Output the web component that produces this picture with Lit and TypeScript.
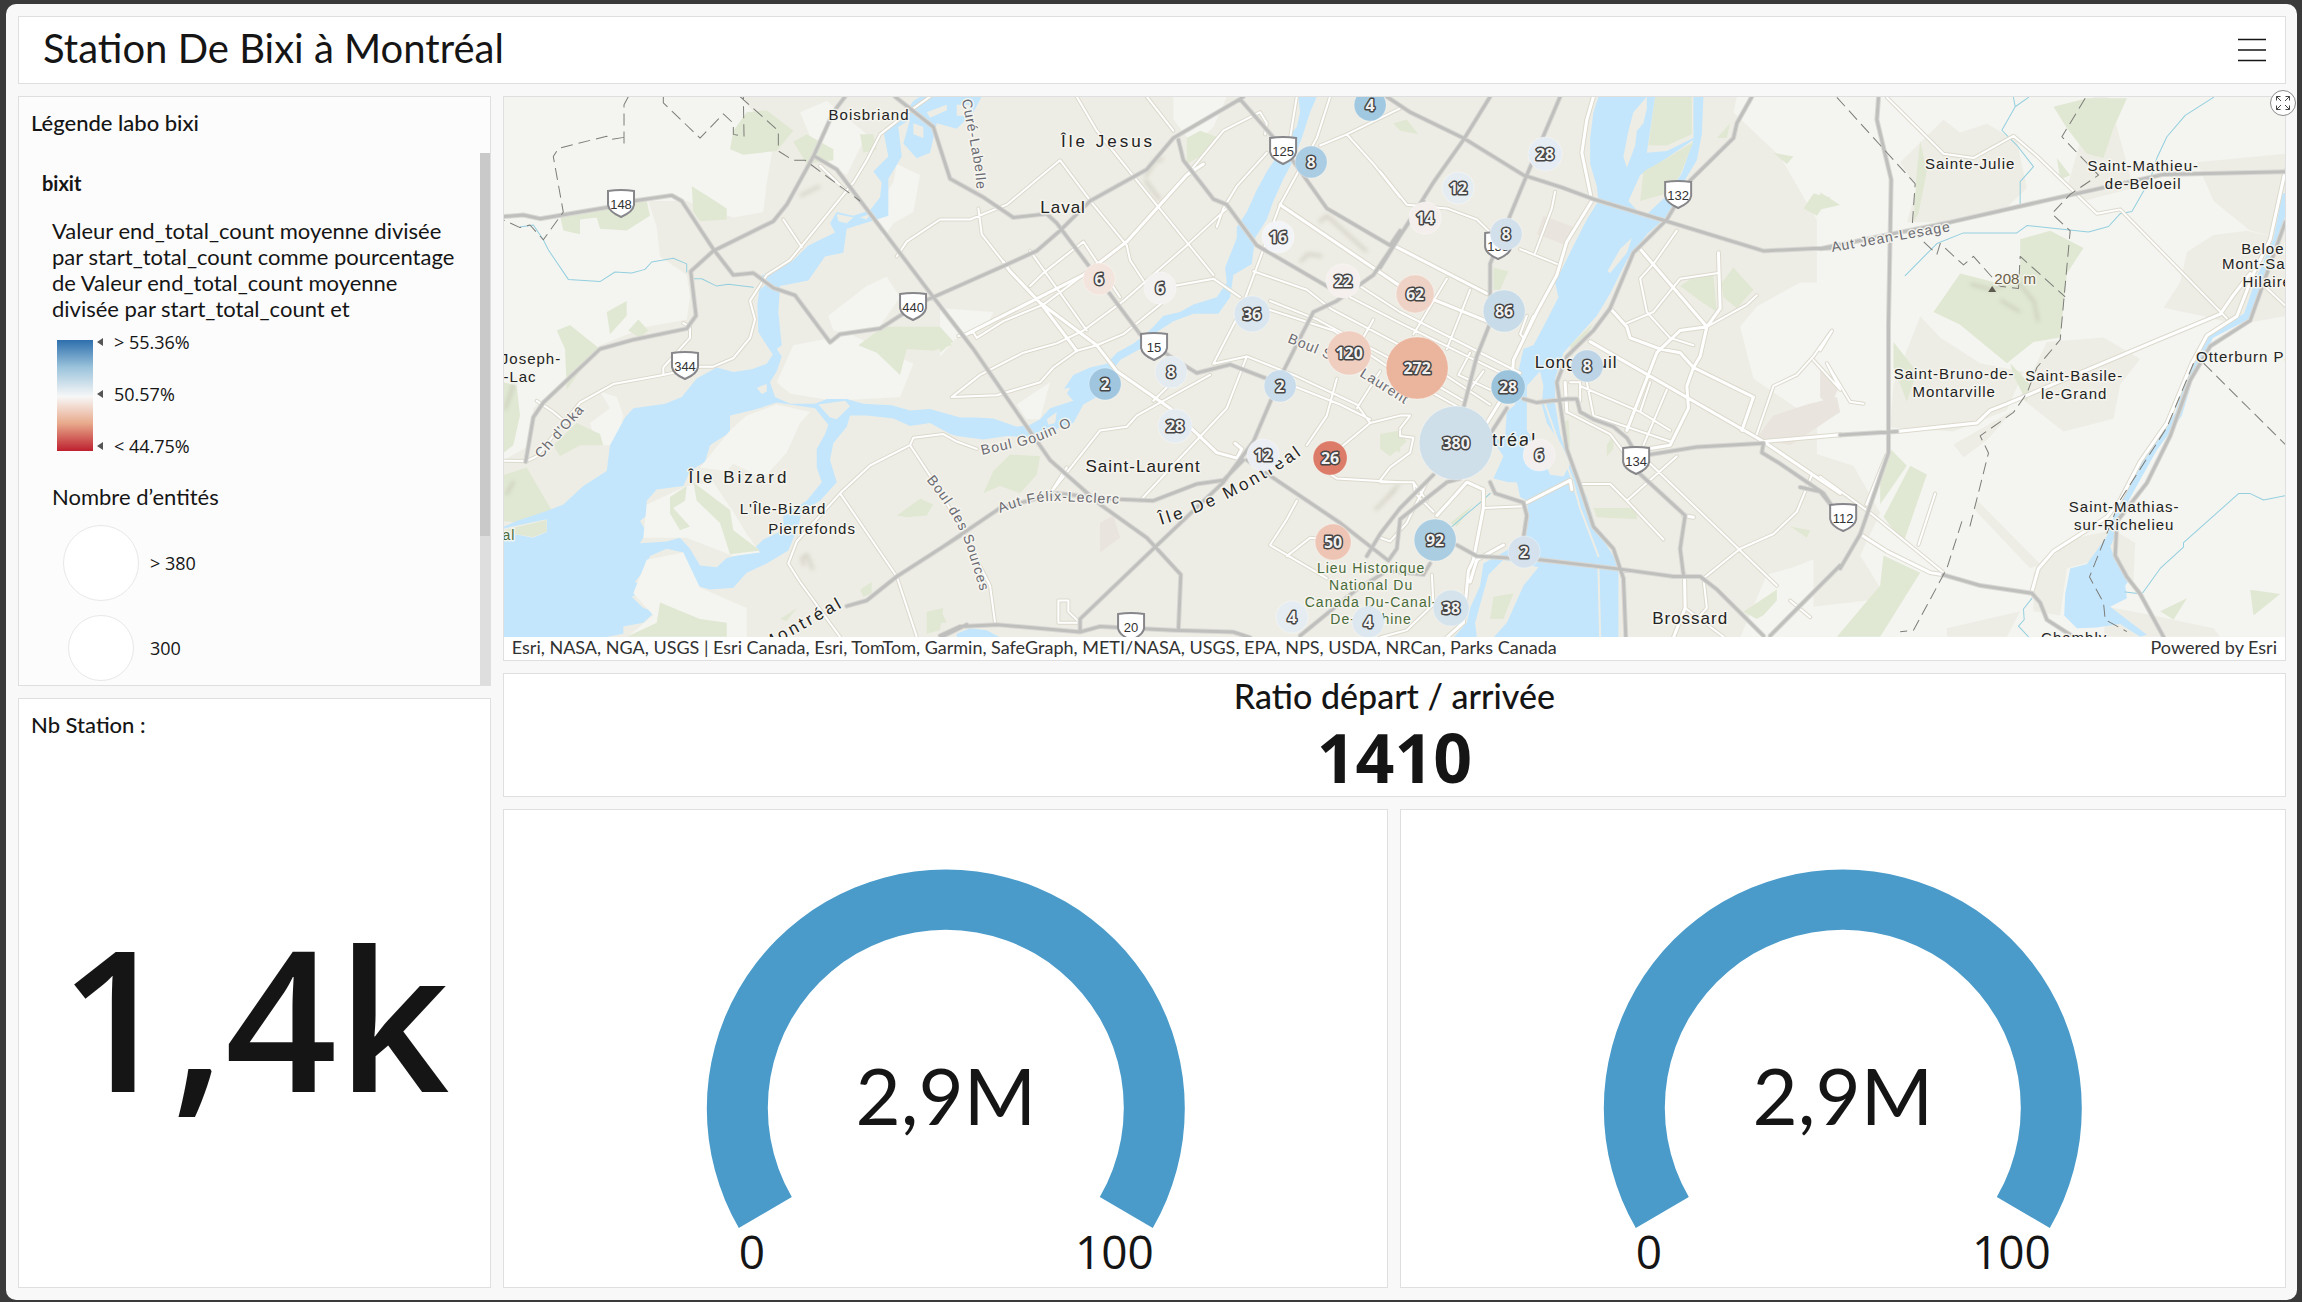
import { LitElement, html, svg, css } from "lit";
import { customElement, property } from "lit/decorators.js";

/* ---------- Base map geometry: tiles with a local grid, joined on one canvas ---------- */

type Tile = { x: number; y: number; sx: number; sy: number };
const T: Record<string, Tile> = {
  A: { x: 500, y: 90, sx: 3, sy: 2.703 },
  B: { x: 940, y: 90, sx: 3, sy: 2.703 },
  C: { x: 1380, y: 90, sx: 3, sy: 2.703 },
  D: { x: 1820, y: 0, sx: 3, sy: 2.34 },
};

/* Each entry is "tile x,y x,y ..." */
const toPath = (entry: string, close: boolean): string => {
  const [name, ...pts] = entry.trim().split(/\s+/);
  let t = T[name];
  const out: string[] = [];
  for (const p of pts) {
    if (T[p]) {
      t = T[p];
      continue;
    }
    const [x, y] = p.split(",").map(Number);
    out.push(`${(t.x + x / t.sx).toFixed(1)} ${(t.y + y / t.sy).toFixed(1)}`);
  }
  return "M" + out.join("L") + (close ? "Z" : "");
};
const areas = (list: string[]) => list.map((e) => toPath(e, true)).join("");
const lines = (list: string[]) => list.map((e) => toPath(e, false)).join("");

const FARM = [
  "A 12,18 720,18 800,100 820,150 800,250 790,330 700,345 560,300 445,300 470,370 480,450 560,500 570,560 560,620 440,640 300,690 180,800 100,860 90,960 12,1000",
  "A 985,610 1100,530 1160,505 1200,560 1130,650 1060,660 1000,650",
  "A 880,690 1050,660 1240,740 1200,830 1000,840 870,820 830,790",
  "A 330,860 300,815 350,830 370,880 350,960 290,960 270,900",
  "A 1150,400 1120,330 1180,250 1190,200 1260,230 1240,330 1180,360",
  "A 900,60 980,30 1100,120 1040,230 960,190",
  "C 1070,18 1380,18 1400,18 1400,1480 1080,1480 1160,1310 1240,1290 1380,1240 1380,940 1340,930 1250,860 1120,780 1080,640 1130,585 1260,520 1330,520 1380,460 1200,180 1060,60",
  "D -10,220 1400,220 1400,1500 -10,1500",
  "B 700,18 860,18 820,100 760,150 700,80",
  "B 230,850 330,790 300,890 260,890",
  "B 0,590 160,600 140,640 60,660 0,720",
];
const TOWN = [
  "D 240,380 370,280 420,310 500,290 590,330 620,440 540,500 390,520 260,520 290,440",
  "D 840,170 870,240 940,440 790,470 740,440",
  "D 1130,380 1395,360 1395,560 1290,540 1180,470",
  "D 1100,590 1180,550 1280,540 1395,560 1395,740 1250,760 1150,740 1030,720 1080,660",
  "D 300,740 360,790 480,850 610,870 560,960 400,1010 210,1000 220,900",
  "D 680,800 850,790 960,840 900,900 880,980 730,1010 600,930",
  "D 640,1340 760,1260 880,1240 945,1270 940,1360 880,1300 740,1330 720,1440 640,1430",
  "D -20,1060 100,1090 180,1200 120,1300 200,1400 -20,1420",
  "D 470,1170 660,1320 630,1330 460,1190",
  "D 380,1470 600,1430 560,1490 380,1490",
  "D 850,1490 860,1420 1000,1440 1180,1470 1200,1490",
  "D 400,1040 580,960 500,1030 430,1070",
];
const DUST = [
  "C 1280,850 1370,830 1380,870 1230,960 1130,940 1180,880",
  "D 0,860 60,900 30,950 0,930",
  "C 490,340 580,370 560,420 470,390",
  "B 480,1170 520,1150 540,1210 480,1250",
];
const GREEN = [
  "A 740,60 800,55 880,110 830,165 730,175 690,160 700,110",
  "A 575,260 620,285 680,320 680,350 600,355 580,330",
  "A 180,340 250,330 440,300 450,340 380,380 300,375 290,345 240,350 240,390 190,380",
  "A 320,600 380,570 380,610 330,660",
  "A 170,650 210,635 300,700 240,760 200,810 195,700",
  "A 385,650 415,620 445,650 420,670",
  "A 1075,690 1150,640 1320,640 1355,690 1300,705 1220,700 1200,770 1130,710",
  "A 12,1040 80,1020 155,1135 60,1170 12,1165",
  "A 160,960 230,900 300,930 310,960 240,960 180,990",
  "A 1190,1150 1260,1105 1300,1120 1280,1150 1220,1155",
  "A 1280,1410 1330,1400 1320,1460 1280,1470",
  "A 1080,1350 1115,1330 1115,1360 1090,1370",
  "A 880,140 920,120 1000,160 1000,190 920,200",
  "A 840,1430 890,1400 860,1435",
  "A 1080,120 1120,120 1130,160 1090,170",
  "A 12,790 50,800 60,880 40,960 12,980",
  "B 160,1030 210,985 300,990 290,1040 240,1090 180,1070 130,1090",
  "B 740,130 780,110 840,130 800,170 740,200",
  "B 0,640 40,680 0,710",
  "B 1320,930 1380,920 1380,980 1350,970",
  "B 0,1400 20,1440 0,1440",
  "C 40,90 80,80 115,120 60,110",
  "C 340,480 385,490 360,540 340,540",
  "C 900,530 950,500 1000,500 1010,600 960,570",
  "C 1025,520 1060,480 1120,540 1070,590 1030,560",
  "C 1010,130 1050,90 1040,130",
  "C 1180,170 1240,180 1220,200",
  "C 1270,320 1300,280 1350,290 1310,340",
  "C 680,960 700,930 700,970 680,990",
  "C 640,1130 770,1130 770,1160 650,1155",
  "C 1090,1410 1190,1350 1190,1380 1150,1420 1130,1430",
  "C 1230,1180 1290,1190 1280,1210",
  "C 0,930 60,930 80,950 30,990 0,970",
  "C 210,1170 280,1120 230,1180",
  "D 700,250 800,230 920,230 880,300 850,370 800,360 740,300",
  "D 300,330 320,400 295,500 280,520 290,400",
  "D 420,640 520,660 600,650 600,560 690,540 790,580 740,640 720,790 640,800 560,850 420,760 340,730",
  "D 220,800 290,870 260,940 220,860",
  "D 570,850 630,900 620,940 580,880",
  "D 210,1050 260,1090 180,1180 180,1120",
  "D 270,1090 320,1110 250,1270 190,1210",
  "D 190,1300 300,1340 180,1490 50,1490 180,1370",
  "D 1290,1380 1380,1390 1300,1440",
  "D 1020,1430 1100,1400 1060,1450",
  "D 0,450 60,480 0,490",
  "D 710,370 750,410 720,420",
];
const WATER = [
  "A 12,1480 12,1180 50,1165 140,1138 190,1120 250,1070 320,1030 330,960 375,885 400,860 495,848 545,830 590,780 650,750 700,762 755,755 800,740 818,715 800,690 775,655 772,580 778,540 800,525 780,505 810,490 880,460 925,420 1005,385 990,360 1010,330 1060,340 1110,325 1140,290 1145,250 1120,220 1165,180 1150,110 1200,80 1240,30 1260,18 1445,18 1420,60 1370,105 1310,90 1290,170 1250,185 1210,145 1230,80 1195,100 1205,180 1165,240 1165,340 1130,350 1040,375 1030,440 975,450 925,515 840,530 835,600 845,690 830,700 845,720 830,760 810,790 825,830 870,848 945,848 980,835 1040,835 1090,848 1175,852 1230,866 1290,862 1380,885 B 110,885 160,888 230,910 270,905 300,890 330,860 400,840 370,810 400,770 450,750 500,740 530,710 580,685 610,665 640,640 670,610 720,600 760,580 830,560 860,520 855,480 890,400 890,370 920,330 950,270 980,220 1010,180 1040,130 1070,100 1080,60 1075,18 1130,18 1110,60 1085,130 1060,190 1030,240 1000,300 980,350 945,400 935,470 880,500 870,560 835,605 760,605 700,625 640,660 600,700 540,730 500,780 470,830 430,850 400,900 360,910 330,930 280,940 200,935 130,945 50,935 A 1350,930 1290,900 1230,908 1180,888 1100,880 1050,880 1040,910 1000,955 990,1000 1010,1060 960,1110 905,1140 895,1180 865,1245 800,1280 740,1305 700,1345 630,1350 590,1340 565,1290 550,1250 500,1240 450,1260 430,1300 405,1330 430,1340 430,1355 395,1370 430,1400 465,1410 430,1440 370,1450 370,1470 310,1480",
  "B 50,1470 90,1455 140,1460 180,1480 50,1480",
  "C 655,18 640,60 630,130 630,200 650,260 655,300 620,350 575,430 525,520 535,560 490,640 460,690 430,700 415,760 405,850 380,870 375,935 340,950 370,990 340,1050 385,1060 410,1060 420,1100 440,1110 445,1150 430,1210 380,1245 310,1280 300,1340 270,1400 260,1440 220,1480 715,1480 715,1300 700,1260 650,1190 620,1100 570,1010 540,930 525,850 525,780 550,710 600,660 650,610 690,550 740,460 800,390 850,350 880,320 880,290 910,250 950,190 965,120 970,18",
  "D 860,1255 800,1320 750,1330 735,1390 732,1440 770,1470 830,1468 900,1460 960,1490 980,1485 870,1420 920,1400 915,1370 925,1360 880,1300",
];
const ISLANDS = [
  "A 420,1225 440,1195 420,1165 440,1150 440,1110 470,1080 550,1070 570,1030 615,1005 630,960 690,925 690,880 760,865 830,845 945,860 985,905 975,930 950,970 950,1020 965,1060 920,1110 850,1150 850,1190 790,1215 750,1250 680,1265 650,1290 600,1285 570,1240 540,1210 500,1220",
  "A 955,850 1035,840 1050,855 1010,890 990,885",
  "A 770,805 800,795 800,815 785,822",
  "A 12,1185 140,1160 140,1195 100,1210 12,1195",
  "A 370,1480 430,1450 500,1390 740,1400 740,1480",
  "A 1240,90 1270,100 1270,130 1240,120",
  "A 1280,60 1340,40 1340,55 1290,75",
  "A 1370,40 1410,40 1400,70 1370,70",
  "A 1010,335 1060,345 1040,360 1015,355",
  "A 1080,345 1110,335 1100,350",
  "B 320,890 350,870 345,900 325,905",
  "B 320,815 390,805 370,840 320,835",
  "C 760,60 800,18 800,50 790,90 770,110 765,150 740,210 730,180 745,110",
  "C 825,18 940,18 940,130 860,165 800,170",
  "C 940,135 905,225 860,285 790,345 745,300 780,230 850,190",
  "C 755,400 740,440 690,495 682,490 720,430",
  "C 440,800 480,760 490,800 485,850 500,900 545,960 570,1010 550,1045 510,1040 470,960 440,920",
  "C 325,1310 370,1270 475,1290 430,1340 380,1440 340,1480 290,1480 285,1440",
];
const ISLAND_LIGHT = [
  "A 690,920 740,880 830,850 930,870 900,900 860,980 790,1050 700,1010 680,1030 600,1020",
  "A 440,1120 560,1070 640,1060 700,1140 740,1200 780,1250 700,1260 560,1210 430,1210",
  "A 440,1270 550,1250 600,1345 740,1400 740,1480 380,1480 460,1420 400,1360",
];
const ISLAND_GREEN = [
  "A 580,1060 690,1135 700,1190 780,1245 690,1255 660,1170 590,1110",
  "A 510,1100 560,1070 555,1110 520,1130 570,1180 540,1190 510,1145",
  "A 12,1190 140,1162 140,1193 100,1208 12,1196",
  "A 480,1385 600,1430 680,1440 680,1478 380,1478 470,1440",
  "C 825,18 935,18 935,120 860,150 805,150",
  "C 940,140 900,230 860,280 780,300 790,220 850,190",
  "C 340,1370 400,1360 370,1430 330,1430",
  "C 550,900 565,890 570,970 552,970",
  "C 570,690 640,630 600,690 575,720",
];
const STREAMS = [
  "A 60,370 100,365 130,405 145,432 205,512 300,518 345,492 395,495 435,485 455,465 520,455 560,470 560,492",
  "A 580,510 605,510 650,530 685,525 760,533",
  "D 580,228 585,250 545,305 590,340 640,390 600,425 600,480",
  "D 625,228 585,250",
  "D 1180,228 1095,270 1040,320 1010,370 990,420 935,495 900,500 865,530 805,543 620,528 590,545 430,545 350,570 255,645",
  "D 1395,1160 1330,1170 1290,1155 1255,1155 1090,1270 1090,1280 1020,1330 965,1390 915,1385",
  "D 635,1400 610,1425 612,1450 595,1465 625,1490",
  "C 215,1180 300,1115 330,1090",
];
const WIDE_STREAMS = ["D 1395,460 1370,560 1315,660 1280,740 1170,785 1110,880 1075,970 1000,1050 950,1120 900,1190 865,1270"];
const MAJOR = [
  "A 12,342 70,338 120,348 320,318 400,300 515,285 545,300 640,430 700,500 760,495 820,535 885,555 990,682 1020,660 1140,645 1200,610 1280,567 B 0,552 180,480 290,435 360,380 450,300 620,215 700,130 900,25 910,18",
  "A 77,1005 100,885 130,845 300,700 400,675 560,645 588,610 572,490 640,435 820,355 860,310 940,180 1000,60 1035,18",
  "A 945,180 1010,215 1090,310 1300,560 B 100,700 260,910 330,1000 480,1120 620,1210 722,1310 715,1460",
  "A 1185,18 1300,100 1350,240 B 130,290 220,345 320,335 350,360 600,660 690,720 770,765 870,742 980,780",
  "B 900,25 1050,180 1160,320 1350,420 1380,380",
  "B 715,135 730,190 820,295 860,310 950,420 1160,530 1200,550",
  "B 1450,300 1300,500 1190,570 1120,600 1080,670 1030,760 940,950 850,1060 640,1240 420,1430 420,1465",
  "B 0,1240 180,1130 350,1090 500,1105 640,1110 770,1065 850,1055 910,1000",
  "B 920,1000 1200,1170 1345,1272 1370,1240 C 60,1160 200,1060 240,1050",
  "C -40,1260 0,1200 60,1130 160,1040",
  "B 0,1475 60,1450 170,1445 420,1465 480,1450 580,1455 700,1460 880,1465 930,1480",
  "A 1380,1205 1190,1315 1100,1380 1040,1395",
  "A 1325,1478 1400,1445",
  "C 20,18 90,60 250,130 430,230 550,265 640,295 860,355 1150,435 1380,425 D 0,582 200,550 390,520 700,465 1030,408 1395,402",
  "C 330,18 250,135 160,250 0,480",
  "C 540,18 440,230 330,470 330,630 290,720 250,860",
  "C 1115,18 1070,90 1060,130 930,245 860,350 760,440 690,590 640,650 560,720 530,790 560,970 600,1070 640,1180 700,1240 730,1320 737,1480",
  "C 430,835 470,845 560,835 590,835 600,870 640,890 700,910 740,940 760,970",
  "C 810,985 950,965 1150,955 1145,980 1200,1010 1330,1090 1360,1130",
  "C 770,1030 915,1150 900,1240 910,1310",
  "C 230,1230 290,1260 480,1270 720,1295 880,1315 960,1315 1010,1350 1150,1475",
  "C 1170,1475 1380,1285 D 60,1330 120,1250 205,1060 205,760 213,420 170,280 175,230",
  "C 330,1060 345,1090 430,1115 440,1150 430,1210",
  "C 380,860 330,930",
  "C 30,1300 130,1310 150,1280",
  "B 1080,1475 1250,1350 1340,1300",
  "D 370,1345 480,1370 635,1388 660,1410 680,1450 760,1490",
  "D -60,1140 0,1150 30,1180",
  "D 60,1018 230,1010",
  "D 1395,520 1340,640 1290,750 1170,810 1110,890 1050,1020 980,1130 890,1220 885,1300 920,1350 960,1390 1030,1490",
];
const MINOR = [
  "A 12,1002 80,1003 110,990 240,845 340,795 490,770 600,748 640,748 700,725 750,670 765,620 750,570 800,500 870,460 1060,250 1100,190 1140,120 1240,50 1290,18",
  "A 490,770 490,750 570,670 570,640 550,630",
  "A 110,840 160,870 200,900",
  "A 850,350 905,425",
  "A 960,205 1040,275",
  "A 1190,450 1220,410 1320,350 1380,350 B 90,350 200,310 360,190 460,310 560,420 570,460 610,515",
  "A 1230,960 1240,940 1330,930 B 50,950 110,970",
  "A 1230,960 1110,1015 1020,1090 890,1220 865,1280 900,1330 1020,1478",
  "A 1020,1090 1190,1315 1250,1478",
  "A 1230,960 1310,1070 B 60,1180 150,1340 165,1440",
  "B 115,320 125,390 190,465",
  "B 410,18 470,110 640,300 820,500",
  "B 620,18 700,110",
  "B 55,665 100,655 110,670 190,625 310,580 430,500 560,410 740,230",
  "B 740,230 850,110 960,60 980,90 975,120",
  "B 35,830 120,770 250,710 350,685 430,650 550,570 740,420 860,320",
  "B 35,830 170,825 300,790 340,750 410,705 470,690 550,660 660,580 700,530 820,510 900,560",
  "B 270,530 310,495 430,410 540,560",
  "B 270,435 440,650",
  "B 980,170 890,260 850,320 830,370",
  "B 1070,18 1050,130",
  "B 1170,18 1130,130 1020,310",
  "B 1020,310 900,600 820,740",
  "B 1140,150 1220,120 1380,50",
  "B 1220,120 1300,200 1380,290",
  "B 940,490 1100,540 1170,590 1380,690 C 330,850",
  "B 940,580 1180,650 1380,770 C 240,860",
  "B 990,570 1130,620 1380,740 C 250,840",
  "B 1230,560 1380,630 C 420,790",
  "B 1260,530 1380,600 C 420,765",
  "B 820,740 920,720 1060,770 1250,850 1290,900 1380,880 C 90,880 60,915",
  "B 1060,800 1200,850 1290,890",
  "B 920,720 860,860 600,1110",
  "B 340,1080 480,920 560,910 590,880 690,830 810,770",
  "B 740,750 640,840",
  "B 1190,780 1160,880 1100,960",
  "B 1250,860 1320,760",
  "B 1300,620 1250,700",
  "B 1290,900 1210,960 1140,1020 1190,1050 1380,1060",
  "B 1070,1110 1040,1160 990,1230 1160,1320",
  "B 1040,1260 1110,1210 1160,1215",
  "B 330,1090 380,1020",
  "B 355,1380 385,1380 385,1410 420,1440 355,1440 355,1380",
  "C 0,220 80,310 200,320 290,350 330,385",
  "C 420,430 530,470",
  "C 525,275 515,320 465,440",
  "C 200,510 100,660",
  "C 270,540 200,700 ",
  "C 270,710 235,770 330,810",
  "C 310,760 270,810",
  "C 460,610 430,670 420,660 440,610",
  "C 560,870 690,930 740,990",
  "C 570,790 600,790 600,840",
  "C 620,790 640,880 870,950",
  "C 600,800 780,870 870,920",
  "C 860,810 790,960",
  "C 780,870 810,790",
  "C 890,380 820,470 780,510 800,600 870,670 940,690",
  "C 1015,495 900,510 820,600 740,630",
  "C 980,640 1100,580 1130,555",
  "C 1130,930 1180,800 1250,770 1300,720 1355,650",
  "C 1300,730 1380,810 D 20,850 90,940 130,945",
  "C 740,1110 890,990",
  "C 600,1065 690,1065 740,1110 850,1215",
  "C 810,1010 1190,1340",
  "C 1295,1040 1250,1140 1180,1200 1080,1240 970,1320 980,1400 960,1420",
  "C 915,1400 1030,1478",
  "C 1230,1380 1290,1425",
  "C 60,920 60,935 100,940 90,980 30,1020 0,1055",
  "C 100,1060 105,1090 160,1140",
  "C 0,1210 30,1220 80,1170 140,1060",
  "C 310,1130 430,1125",
  "C 0,1480 80,1460 160,1390 155,1310",
  "C 0,1060 100,1060 140,1110",
  "D 200,228 370,360 460,370 580,318 650,365 830,500 900,490 1220,745",
  "D 1320,660 1395,715",
  "D 345,1155 295,1275",
  "D 0,820 35,775",
  "D 0,1115 150,1200 370,1340",
];
const AVENUES = [
  "B 190,465 210,490 300,575 410,705",
  "B 300,575 470,690 530,760 690,860 830,980 890,995 905,970 885,955",
  "B 80,660 430,500 560,410 740,230 790,200",
  "B 1020,310 1380,530 C 320,625",
  "B 1360,420 C 320,550",
  "C 640,18 620,80 605,170 635,300 560,410 530,500 470,600 400,730 395,790 320,900",
  "C 690,590 740,640 750,670 840,700 900,710 940,750 920,800 925,860 870,960 800,970",
  "C 780,430 980,640 960,720 940,750",
  "C 1015,440 1020,590 980,640 900,650 830,710 740,920",
  "C 630,680 1150,950 1380,1090",
  "C 940,750 1120,830 1085,920",
  "C 555,790 560,870",
  "C 440,1115 570,1055 575,1080",
  "C 910,1150 940,1155",
  "C 913,1310 915,1400 880,1480",
  "C 170,1150 200,1120 260,1060 310,1080 310,1130 280,1270 265,1300 250,1440 200,1480",
  "C 270,1330 290,1270 370,1230",
  "C 1150,950 1380,932 D 60,1018",
  "D 230,1010 470,990 510,960 560,945 1000,800 1200,735 1240,690 1290,640",
  "D 1395,400 1350,560 1300,640 1250,740 1160,785 1115,850 1040,990 960,1080 900,1170 860,1210 700,1290 655,1330 635,1385",
  "D 200,1065 140,1180",
  "D 120,1250 200,1290 330,1340 370,1345",
];
const BORDERS = [
  "A 385,18 372,40 372,155",
  "A 372,128 330,134 320,125 175,158 160,180 190,330 130,405 90,365 60,372 12,352",
  "A 490,18 490,35 600,130 670,65 700,90 700,120 732,125 730,18",
  "A 720,18 835,110 835,165 880,190 915,190 1080,300",
  "D 50,228 285,430 275,540 350,595 360,570 430,620 460,600 540,670 595,675 600,600 735,695",
  "D 795,230 725,320 835,410 750,455 695,500 750,540 720,795 650,860 620,920 580,965 480,1020 505,1060 445,1245",
  "D 425,1220 380,1330 280,1475 240,1478",
  "D 1150,850 1395,1040",
  "D 1120,850 1040,1000 900,1170 808,1350 850,1410 855,1450 920,1478",
];

type Label = [text: string, x: number, y: number, kind: string];
const LABELS: Label[] = [
  ["Boisbriand", 869, 120, "town"],
  ["Île Bizard", 739, 483, "isle"],
  ["L'Île-Bizard", 783, 514, "town"],
  ["Pierrefonds", 812, 534, "town"],
  ["Joseph-", 531, 364, "town"],
  ["-Lac", 520, 382, "town"],
  ["al", 509, 540, "park"],
  ["Île Jesus", 1108, 147, "isle"],
  ["Laval", 1063, 213, "city"],
  ["Saint-Laurent", 1143, 472, "city"],
  ["Lieu Historique", 1371, 573, "park"],
  ["National Du", 1371, 590, "park"],
  ["Canada Du-Canal-", 1371, 607, "park"],
  ["De-Lachine", 1371, 624, "park"],
  ["Longueuil", 1576, 368, "city"],
  ["Montréal", 1494, 446, "metro"],
  ["Brossard", 1690, 624, "city"],
  ["Sainte-Julie", 1970, 169, "town"],
  ["Saint-Mathieu-", 2143, 171, "town"],
  ["de-Beloeil", 2143, 189, "town"],
  ["Saint-Bruno-de-", 1954, 379, "town"],
  ["Montarville", 1954, 397, "town"],
  ["Saint-Basile-", 2074, 381, "town"],
  ["le-Grand", 2074, 399, "town"],
  ["Saint-Mathias-", 2124, 512, "town"],
  ["sur-Richelieu", 2124, 530, "town"],
  ["Beloeil", 2267, 254, "town"],
  ["Mont-Saint-", 2266, 269, "town"],
  ["Hilaire", 2267, 287, "town"],
  ["Otterburn Park", 2252, 362, "town"],
  ["Chambly", 2074, 643, "town"],
  ["208 m", 2015, 284, "peak"],
];

const STREETS: [id: string, d: string, text: string, kind: string][] = [
  ["s1", "M541 459 L600 393", "Ch d'Oka", "street"],
  ["s2", "M958 82 Q968 130 975 170 L980 230", "ul Curé-Labelle", "street"],
  ["s3", "M982 455 L1030 444 Q1060 434 1090 415", "Boul Gouin O", "street"],
  ["s4", "M1000 513 Q1030 500 1060 501 L1140 505", "Aut Félix-Leclerc", "street"],
  ["s5", "M926 480 Q955 515 966 545 L986 610", "Boul des Sources", "street"],
  ["s6", "M1287 342 L1340 364 L1430 420", "Boul Saint-Laurent", "street"],
  ["s7", "M1832 252 L1990 224", "Aut Jean-Lesage", "street"],
  ["s8", "M1161 525 Q1245 500 1330 434", "Île De Montréal", "isle"],
  ["s9", "M766 650 L880 586", "Montréal", "isle"],
];

const SHIELDS: [string, number, number][] = [
  ["148", 621, 204], ["344", 685, 366], ["440", 913, 307], ["125", 1283, 151],
  ["15", 1154, 347], ["20", 1131, 627], ["138", 1498, 246], ["132", 1678, 195],
  ["134", 1636, 461], ["112", 1843, 518],
];

const CLUSTERS: [n: number, x: number, y: number, r: number, fill: string][] = [
  [4, 1370, 105, 16, "#a0c8e0"], [8, 1311, 162, 16, "#aacde3"], [16, 1278, 237, 16, "#f2f4f7"],
  [22, 1343, 281, 17, "#f5f0ee"], [6, 1099, 279, 16, "#f3e4dd"], [6, 1160, 288, 16, "#f4f1f1"],
  [36, 1252, 314, 18, "#dae6ef"], [120, 1349, 353, 22, "#efcdbf"], [8, 1171, 372, 16, "#e3ebf1"],
  [2, 1105, 384, 16, "#a0c6df"], [2, 1280, 386, 16, "#c8dceb"], [28, 1175, 426, 17, "#e5ecf1"],
  [12, 1263, 455, 16, "#ebeff4"], [26, 1330, 458, 17, "#dc7b68"], [50, 1333, 542, 18, "#eec5b4"],
  [4, 1292, 617, 16, "#e5edf3"], [4, 1368, 622, 16, "#dce7ef"], [28, 1545, 154, 17, "#e6ecf3"],
  [12, 1458, 188, 16, "#e6edf2"], [14, 1425, 218, 16, "#f4efed"], [8, 1506, 234, 16, "#d2e0ec"],
  [62, 1415, 294, 19, "#efd2c6"], [86, 1504, 311, 21, "#c7dbe8"], [272, 1417, 368, 31, "#ebb49c"],
  [28, 1508, 387, 17, "#9bc3db"], [8, 1587, 366, 16, "#bcd4e6"], [380, 1456, 443, 37, "#cfdfea"],
  [6, 1539, 455, 16, "#f3efee"], [92, 1435, 540, 21, "#abcde1"], [2, 1524, 552, 16, "#d5e2ed"],
  [38, 1451, 608, 18, "#d5e3ed"],
];

@customElement("station-map")
export class StationMap extends LitElement {
  static styles = css`
    :host {
      display: flex;
      flex-direction: column;
      flex: 1;
      min-width: 0;
      min-height: 0;
      font-family: Lato, "Open Sans", sans-serif;
    }
    .canvas {
      flex: 1;
      min-height: 0;
      width: 100%;
      display: block;
      background: #eeede5;
    }
    .credits {
      display: flex;
      justify-content: space-between;
      padding: 0 8px 3px;
      font-size: 18px;
      line-height: 20px;
      color: #323232;
      white-space: nowrap;
      background: #ffffff;
    }
    .line { fill: none; stroke-linejoin: round; stroke-linecap: round; }
    .land-farm { fill: #f4f5f0; }
    .land-town { fill: #eeede5; }
    .land-dust { fill: #e9e4dd; }
    .wood { fill: #e0e8d3; }
    .water { fill: #c3e6fc; }
    .stream { stroke: #93cfdf; stroke-width: 1; }
    .river { stroke: #c3e6fc; stroke-width: 7; }
    .minor-edge { stroke: #dcd9cd; stroke-width: 4; }
    .minor { stroke: #ffffff; stroke-width: 2; }
    .avenue-edge { stroke: #dcd9cd; stroke-width: 5; }
    .avenue { stroke: #ffffff; stroke-width: 3; }
    .major-edge { stroke: #d9d8d4; stroke-width: 5; }
    .major { stroke: #bfbfbd; stroke-width: 3; }
    .dike { stroke: #eeede5; stroke-width: 2; }
    .border { stroke: #7c7c78; stroke-width: 1; stroke-dasharray: 12 6; stroke-linecap: butt; }
    .relief { fill: none; stroke: #aaa794; stroke-width: 3; opacity: 0.4; filter: blur(2px); }
    text {
      font-family: "Liberation Sans", Arial, sans-serif;
      text-anchor: middle;
      paint-order: stroke;
      stroke-linejoin: round;
      stroke: rgba(246, 246, 240, 0.9);
      stroke-width: 3px;
      fill: #232323;
      font-size: 15px;
      letter-spacing: 1px;
    }
    .city { font-size: 17px; }
    .metro { font-size: 18px; letter-spacing: 2px; }
    .isle { font-size: 17px; letter-spacing: 3px; }
    .park { font-size: 14px; fill: #4a6b3a; }
    .peak { fill: #6b6047; letter-spacing: 0; }
    .street { font-size: 14px; fill: #6a6a72; }
    .along { text-anchor: start; }
    .shield { fill: #ffffff; stroke: #87878b; stroke-width: 2; }
    .route { font-size: 13px; letter-spacing: 0; stroke: none; fill: #333333; }
    .count {
      font-family: "Open Sans", "Noto Sans", sans-serif;
      font-weight: 700;
      font-size: 16px;
      letter-spacing: 0;
      fill: #f1f1f1;
      stroke: #454545;
      stroke-width: 3px;
    }
    .dot { stroke: #ffffff; stroke-opacity: 0.3; stroke-width: 1; }
  `;

  render() {
    return html`
      <svg class="canvas" viewBox="504 97 1781 540" preserveAspectRatio="xMidYMid slice" role="img" aria-label="Carte des stations">
        <path class="land-farm" d=${areas(FARM)}></path>
        <path class="land-town" d=${areas(TOWN)}></path>
        <path class="land-dust" d=${areas(DUST)}></path>
        <path class="wood" d=${areas(GREEN)}></path>
        <path class="water" d=${areas(WATER)}></path>
        <path class="land-town" d=${areas(ISLANDS)}></path>
        <path class="land-farm" d=${areas(ISLAND_LIGHT)}></path>
        <path class="wood" d=${areas(ISLAND_GREEN)}></path>
        <path class="relief" d="M1145 177 l10 -16 l8 -2 M1145 180 l15 20 M1319 222 l8 -6 l40 36 M1300 262 l8 -8 l14 2 M800 196 l20 -10 M804 566 l-2 -8 l5 -3 l6 15 M1970 284 l22 6 l12 -6 M2018 282 l16 20 l4 20 M2000 300 l20 12 M505 410 l10 -30 M506 495 l8 -14 M1375 510 l20 -20 M1385 500 l14 -16"></path>
        <path class="line stream" d=${lines(STREAMS)}></path>
        <path class="line river" d=${lines(WIDE_STREAMS)}></path>
        <path class="line dike" d=${lines(["C 495,850 530,940 575,1050 600,1130 655,1260", "C 655,1290 660,1478"])}></path>
        <path class="line minor-edge" d=${lines(MINOR)}></path>
        <path class="line avenue-edge" d=${lines(AVENUES)}></path>
        <path class="line minor" d=${lines(MINOR)}></path>
        <path class="line avenue" d=${lines(AVENUES)}></path>
        <path class="line major-edge" d=${lines(MAJOR)}></path>
        <path class="line major" d=${lines(MAJOR)}></path>
        <path class="line border" d=${lines(BORDERS)}></path>
        <path fill="#5d5a50" d="M1988 292 l4 -6 l4 6 Z"></path>
        ${STREETS.map(
          ([id, d, text, kind]) => svg`
            <path id=${id} fill="none" d=${d}></path>
            <text class="${kind} along"><textPath href="#${id}">${text}</textPath></text>`
        )}
        ${LABELS.map(([text, x, y, kind]) => svg`<text class=${kind} x=${x} y=${y}>${text}</text>`)}
        ${SHIELDS.map(
          ([n, x, y]) => svg`
            <path class="shield" transform="translate(${x} ${y})"
              d="M-13 -13 Q0 -15 13 -13 L13 1 Q12 8 0 13 Q-12 8 -13 1 Z"></path>
            <text class="route" x=${x} y=${y + 5}>${n}</text>`
        )}
        ${CLUSTERS.map(
          ([n, x, y, r, fill]) => svg`
            <circle class="dot" cx=${x} cy=${y} r=${r} fill=${fill}></circle>
            <text class="count" x=${x} y=${y + 6}>${n}</text>`
        )}
      </svg>
      <div class="credits">
        <span>Esri, NASA, NGA, USGS | Esri Canada, Esri, TomTom, Garmin, SafeGraph, METI/NASA, USGS, EPA, NPS, USDA, NRCan, Parks Canada</span>
        <span>Powered by Esri</span>
      </div>
    `;
  }
}

@customElement("station-gauge")
export class StationGauge extends LitElement {
  @property() value = "";
  @property() min = "0";
  @property() max = "100";

  static styles = css`
    :host { display: flex; flex: 1; min-width: 0; min-height: 0; }
    svg { width: 100%; height: 100%; display: block; }
    text { font-family: "Open Sans", "Noto Sans", sans-serif; fill: #151515; font-size: 46px; }
    .value { font-family: Lato, "Open Sans", sans-serif; font-size: 78px; text-anchor: middle; }
    .end { text-anchor: end; }
  `;

  render() {
    return html`
      <svg viewBox="0 0 480 477" role="img" aria-label="Jauge ${this.value}">
        <path fill="#4a9bca" d="M33 418 A239 239 0 1 1 447 418 L394 387 A178 178 0 1 0 86 387 Z"></path>
        <text class="value" x="240" y="315">${this.value}</text>
        <text x="33" y="459">${this.min}</text>
        <text class="end" x="448" y="459">${this.max}</text>
      </svg>
    `;
  }
}

@customElement("app-root")
export class AppRoot extends LitElement {
  static styles = css`
    :host {
      display: flex;
      box-sizing: border-box;
      height: 100vh;
      padding: 4px 5px 2px 6px;
      background: #3a3a3a;
      font-family: Lato, "Open Sans", sans-serif;
      color: #151515;
    }
    * { box-sizing: border-box; }
    h1, h2, h3, p { margin: 0; font-weight: 400; }
    .page {
      flex: 1;
      min-width: 0;
      display: flex;
      flex-direction: column;
      gap: 12px;
      padding: 12px 11px 12px 12px;
      background: #f8f8f8;
      border-radius: 10px;
    }
    .panel {
      background: #ffffff;
      border: 1px solid #dfdfdf;
      min-width: 0;
      min-height: 0;
      display: flex;
      flex-direction: column;
    }
    .header {
      flex-direction: row;
      align-items: center;
      justify-content: space-between;
      height: 68px;
      padding: 0 19px 4px 24px;
    }
    .title { font-size: 40px; line-height: 60px; }
    .menu {
      display: flex;
      padding: 4px 0 0;
      border: 0;
      background: none;
      cursor: pointer;
    }
    .body {
      flex: 1;
      min-height: 0;
      display: grid;
      grid-template-columns: minmax(0, 473fr) minmax(0, 1784fr);
      gap: 12px;
    }
    .side { display: grid; grid-template-rows: minmax(0, 1fr) minmax(0, 1fr); gap: 12px; min-height: 0; }
    .main {
      display: grid;
      grid-template-rows: minmax(0, 565fr) minmax(0, 124fr) minmax(0, 479fr);
      gap: 12px;
      min-height: 0;
    }
    .gauges { display: grid; grid-template-columns: 1fr 1fr; gap: 12px; min-height: 0; }
    .legend { background: #fcfcfc; }
    .caption { padding: 12px 12px 16px; font-size: 22px; line-height: 28px; font-weight: 500; }
    .scroller { flex: 1; min-height: 0; display: flex; }
    .content { flex: 1; min-width: 0; overflow: hidden; padding: 18px 12px 0 23px; }
    .track { width: 10px; background: #dedede; }
    .thumb { height: 72%; background: #c9c9c9; }
    .layer { font-size: 20px; line-height: 24px; font-weight: 700; }
    .layer-body { padding: 23px 0 0 10px; }
    .text { font-size: 22px; line-height: 26px; }
    .ramp { display: flex; padding: 18px 0 0 5px; }
    .bar {
      width: 36px;
      height: 111px;
      background: linear-gradient(#2e6fad 0%, #9cc4dc 25%, #f7f7f7 51%, #e8aa8c 75%, #be202e 100%);
    }
    .stops {
      list-style: none;
      margin: -10px 0 -7px;
      padding: 0 0 0 4px;
      display: flex;
      flex-direction: column;
      justify-content: space-between;
    }
    .stop { display: flex; align-items: center; gap: 11px; font-size: 18px; line-height: 24px; }
    .row { display: flex; align-items: center; gap: 11px; font-size: 18px; line-height: 24px; }
    .sizes { padding: 15px 0 0 11px; display: flex; flex-direction: column; gap: 14px; }
    .cell { width: 76px; display: flex; justify-content: center; }
    .bubble { background: #ffffff; border: 1px solid #e8e8e8; border-radius: 50%; flex: none; }
    .big { width: 76px; height: 76px; }
    .mid { width: 66px; height: 66px; }
    .heading { padding-top: 33px; }
    .digits { font-family: "Open Sans", "Noto Sans", sans-serif; }
    .total {
      flex: 1;
      display: flex;
      align-items: center;
      justify-content: center;
      padding-bottom: 10px;
      font-size: 196px;
      line-height: 200px;
      font-weight: 600;
    }
    .ratio { align-items: center; justify-content: center; }
    .ratio-title { font-size: 34px; line-height: 44px; font-weight: 500; }
    .ratio-value { font-size: 68px; line-height: 78px; font-weight: 700; }
    .map { position: relative; }
    .expand {
      position: absolute;
      top: -7px;
      right: -11px;
      width: 26px;
      height: 26px;
      padding: 0;
      border: 1px solid #8a8a8a;
      border-radius: 50%;
      background: #ffffff;
      display: flex;
      align-items: center;
      justify-content: center;
      cursor: pointer;
    }
  `;

  render() {
    const stop = (label: string) => html`
      <li class="stop">
        <svg width="6" height="8" viewBox="0 0 6 8" aria-hidden="true"><path d="M6 0V8L0 4Z" fill="#555555"></path></svg>
        <span class="digits">${label}</span>
      </li>`;
    return html`
      <div class="page">
        <header class="panel header">
          <h1 class="title">Station De Bixi à Montréal</h1>
          <button class="menu" aria-label="Menu">
            <svg width="28" height="28" viewBox="0 0 28 28" aria-hidden="true">
              <path d="M0 3.500H28M0 14H28M0 24.500H28" stroke="#151515" stroke-width="1.500" fill="none"></path>
            </svg>
          </button>
        </header>
        <div class="body">
          <aside class="side">
            <section class="panel legend">
              <h2 class="caption">Légende labo bixi</h2>
              <div class="scroller">
                <div class="content">
                  <h3 class="layer">bixit</h3>
                  <div class="layer-body">
                    <p class="text">Valeur end_total_count moyenne divisée par start_total_count comme pourcentage de Valeur end_total_count moyenne divisée par start_total_count et</p>
                    <div class="ramp">
                      <div class="bar"></div>
                      <ul class="stops">${["> 55.36%", "50.57%", "< 44.75%"].map(stop)}</ul>
                    </div>
                    <p class="text heading">Nombre d’entités</p>
                    <div class="sizes">
                      <div class="row"><span class="cell"><span class="bubble big"></span></span><span class="digits">&gt; 380</span></div>
                      <div class="row"><span class="cell"><span class="bubble mid"></span></span><span class="digits">300</span></div>
                    </div>
                  </div>
                </div>
                <div class="track"><div class="thumb"></div></div>
              </div>
            </section>
            <section class="panel">
              <h2 class="caption">Nb Station :</h2>
              <p class="total digits">1,4k</p>
            </section>
          </aside>
          <main class="main">
            <section class="panel map">
              <station-map></station-map>
              <button class="expand" aria-label="Agrandir">
                <svg width="14" height="14" viewBox="0 0 14 14" aria-hidden="true">
                  <path d="M.5 4.500V.5H4.500M.5.5L5 5M9.500.5H13.500V4.500M13.500.5L9 5M.5 9.500V13.500H4.500M.5 13.500L5 9M13.500 9.500V13.500H9.500M13.500 13.500L9 9" stroke="#444444" fill="none"></path>
                </svg>
              </button>
            </section>
            <section class="panel ratio">
              <h2 class="ratio-title">Ratio départ / arrivée</h2>
              <p class="ratio-value digits">1410</p>
            </section>
            <div class="gauges">
              <section class="panel"><station-gauge value="2,9M"></station-gauge></section>
              <section class="panel"><station-gauge value="2,9M"></station-gauge></section>
            </div>
          </main>
        </div>
      </div>
    `;
  }
}
